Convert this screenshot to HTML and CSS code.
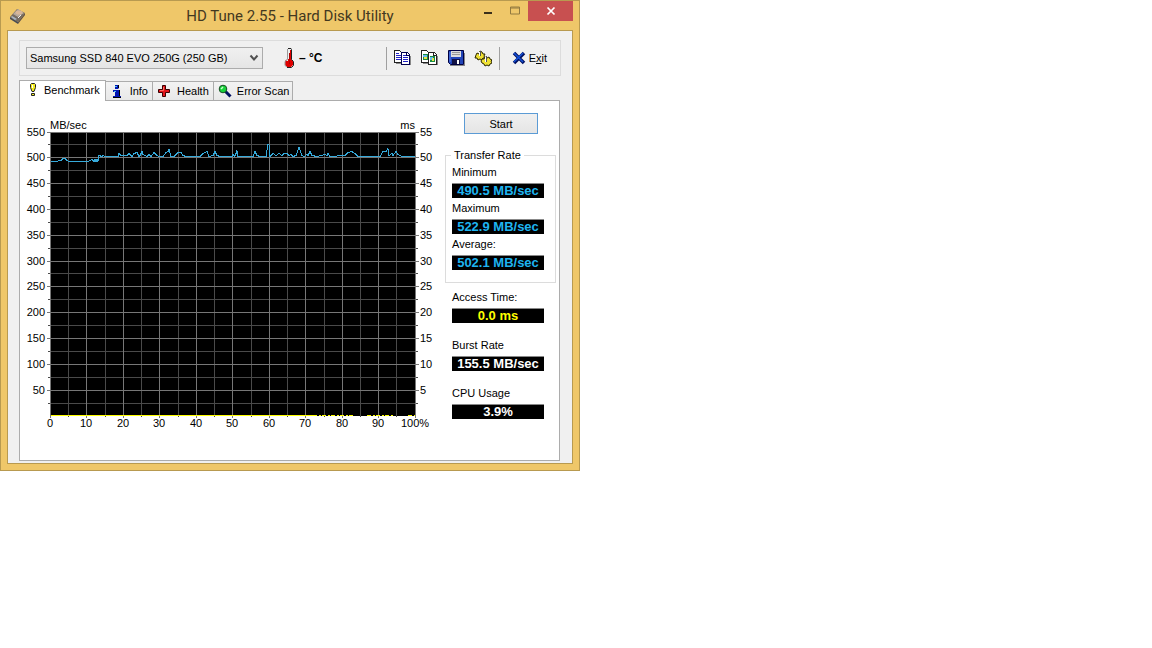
FILE: index.html
```html
<!DOCTYPE html>
<html lang="en">
<head>
<meta charset="utf-8">
<title>HD Tune 2.55 - Hard Disk Utility</title>
<link rel="stylesheet" href="styles.css">
</head>
<body>
<main class="window">
  <header class="titlebar">
    <svg class="app-icon" width="18" height="18" viewBox="0 0 18 18" aria-hidden="true">
      <path d="M1 10 8 2l8 4-7 9z" fill="#756b62"/><path d="M1 10v2l8 5v-2z" fill="#474b55"/><path d="M9 15v2l7-9V6z" fill="#5f5147"/>
      <path d="M4 7 9 2l6 4-6 4z" fill="#b7a99c"/><ellipse cx="10" cy="5.500" rx="3.500" ry="2" fill="#d8b79a"/><path d="m3 9 5 3-2 1-4-3z" fill="#a8b5c4"/><path d="m9 11 3-3" stroke="#eee"/>
    </svg>
    <h1 class="title">HD Tune 2.55 - Hard Disk Utility</h1>
    <div class="controls">
      <button class="control" aria-label="Minimize"><svg width="10" height="12"><path d="M1 7h8v2H1z" fill="#3b2f1a"/></svg></button>
      <button class="control" aria-label="Maximize" disabled><svg width="12" height="12"><path d="M1.500 2h9v7h-9zM1 3h10" fill="none" stroke="#927a40"/></svg></button>
      <button class="control close" aria-label="Close"><svg width="10" height="10"><path d="m1.500 1.500 7 7m0-7-7 7" stroke="#fff" stroke-width="1.700"/></svg></button>
    </div>
  </header>

  <div class="client">
    <div class="toolbar">
      <select class="drive" aria-label="Drive"><option>Samsung SSD 840 EVO 250G (250 GB)</option></select>
      <div class="temperature">
        <svg width="12" height="20" viewBox="0 0 12 20" aria-hidden="true">
          <path d="M4 2h4v9l2 2v4l-2 2H4l-2-2v-4l2-2z" fill="#e00000"/><path d="M4 2h2v9H5v2H3v-1l1-1zM5 1h2v4H5z" fill="#eee"/>
          <path d="M5 .5h3l.5 1v10l2 2v4l-2 2H4" fill="none" stroke="#222"/><path d="M4.500 1v10.500L2 13.500v4l2 1.500" fill="none" stroke="#999"/><path d="M6.500 5v11" stroke="#b00000"/>
        </svg>
        <span>– °C</span>
      </div>
      <div class="tools">
        <button class="tool" aria-label="Copy text to clipboard">
          <svg width="18" height="18" viewBox="0 0 18 18" shape-rendering="crispEdges"><path d="M3 14h5v1H3zM9 16h9V7h-1v9z" fill="#888"/>
            <path d="M1.500 1.500h5l2 2v10h-7z" fill="#fff" stroke="#222"/><path d="M3 4.500h3M3 6.500h5M3 8.500h5M3 10.500h5" stroke="#2222c8"/>
            <path d="M8.500 3.500h6l2 2v10h-8z" fill="#fff" stroke="#000050"/><path d="M13.500 3.500v3h3" fill="none" stroke="#000050"/><path d="M10 6.500h3M10 8.500h5M10 10.500h5M10 12.500h5" stroke="#2222c8"/></svg>
        </button>
        <button class="tool" aria-label="Copy screenshot to clipboard">
          <svg width="18" height="18" viewBox="0 0 18 18" shape-rendering="crispEdges"><path d="M3 14h5v1H3zM9 16h9V7h-1v9z" fill="#888"/>
            <path d="M1.500 1.500h5l2 2v10h-7z" fill="#fff" stroke="#222"/><path d="M3 5h5v6H3z" fill="#178b42"/><path d="M3 6h4v2H3z" fill="#68b8ef"/><path d="M4 8h3v2H4z" fill="#eae34b"/>
            <path d="M8.500 3.500h6l2 2v10h-8z" fill="#fff" stroke="#222"/><path d="M13.500 3.500v3h3" fill="none" stroke="#222"/><path d="M10 7h5v6h-5z" fill="#178b42"/><path d="M10 8h3v3h-3z" fill="#68b8ef"/><path d="M12 9h2v3h-2z" fill="#eae34b"/></svg>
        </button>
        <button class="tool" aria-label="Save screenshot">
          <svg width="18" height="18" viewBox="0 0 18 18"><path d="M3 16h14V4h1v13H3z" fill="#888"/><path d="M1.500 1.500h15v14h-13l-2-2z" fill="#2144b8" stroke="#000040"/>
            <path d="M4 2h10v6H4z" fill="#ddd"/><path d="M5 3.500h8M5 5.500h8" stroke="#999"/><path d="M5 10h8v5H5z" fill="#111144"/><path d="M10 11h2v4h-2z" fill="#fff"/><path d="M3 3v10" stroke="#5c86f0"/></svg>
        </button>
        <button class="tool" aria-label="Options">
          <svg width="18" height="18" viewBox="0 0 18 18">
            <path d="m2 6 1-2 2 1 1-3 2 1 1 2 2 0-1 2 1 2-2 0-1 2-2-1-2 1-1-2-2 0z" fill="#eee032" stroke="#2a2600"/>
            <path d="m7 12 1-2 2 0 1-2 2 1 2-1 1 2 2 1-1 1 1 2-2 1-1 2-2-1-2 1-1-2-2-1z" fill="#eee032" stroke="#2a2600"/>
            <path d="M6.500 2v5M12.500 7v6" stroke="#555"/><path d="M5.500 3v4M11.500 8v5" stroke="#fff"/></svg>
        </button>
      </div>
      <button class="exit">
        <svg width="14" height="14" viewBox="0 0 14 14" aria-hidden="true"><path d="m2 2 10 10m0-10-10 10" stroke="#001060" stroke-width="3.500"/><path d="m2 2 9 9m0-9-9 9" stroke="#1552d8" stroke-width="1.500"/></svg>
        <span>E<u>x</u>it</span>
      </button>
    </div>

    <div class="tabs" role="tablist">
      <button class="tab active" role="tab" aria-selected="true">
        <svg width="10" height="14" viewBox="0 0 10 14" aria-hidden="true"><path d="M3.500.5h3l1 1v3l-1.500 4h-2l-1.500-4v-3zM3.500 10.500h3v2h-3z" fill="#f4ed20" stroke="#222"/><path d="M4.500 2v3" stroke="#fff"/></svg>Benchmark</button>
      <button class="tab" role="tab" aria-selected="false">
        <svg width="14" height="14" viewBox="-2 0 14 14" aria-hidden="true"><path d="M3 1h3l1 1v2L6 5H3V1zM1 6h6v6h2v2H1v-2h2V8H1z" fill="#0014b4"/><path d="M6.500 1v3M7.500 6v6M9 13.500H1" stroke="#000"/><path d="M3 2h2v1H3zM2 7h2v1H2z" fill="#4ac4f0"/></svg>Info</button>
      <button class="tab" role="tab" aria-selected="false">
        <svg width="14" height="14" viewBox="0 0 14 14" aria-hidden="true"><path d="M5.500 1.500h3v4h4v3h-4v4h-3v-4h-4v-3h4z" fill="#e2141a" stroke="#3a0000"/><path d="M6.500 3v3.500H3" fill="none" stroke="#ff6c65"/></svg>Health</button>
      <button class="tab" role="tab" aria-selected="false">
        <svg width="14" height="14" viewBox="0 0 14 14" aria-hidden="true"><path d="m7.500 7.500 5 5" stroke="#001060" stroke-width="3"/><circle cx="5" cy="5" r="3.800" fill="#18d33b" stroke="#174d24"/><path d="M3 5 5 3" stroke="#c7ffc9" stroke-width="1.500"/></svg>Error Scan</button>
    </div>

    <section class="panel">
      <svg class="chart" viewBox="20 110 420 325" role="img" aria-label="Transfer rate benchmark">
        <path d="M50 132h366v284H50z" fill="#000"/>
        <path class="minor" d="M48 144.500h370M48 170.500h370M48 196.500h370M48 222.500h370M48 248.500h370M48 273.500h370M48 299.500h370M48 325.500h370M48 351.500h370M48 377.500h370M48 403.500h370M68.500 132v285M105.500 132v285M141.500 132v285M178.500 132v285M214.500 132v285M251.500 132v285M287.500 132v285M324.500 132v285M360.500 132v285M396.500 132v285"/>
        <path class="major" d="M47 132.500h372M47 157.500h372M47 183.500h372M47 209.500h372M47 235.500h372M47 261.500h372M47 286.500h372M47 312.500h372M47 338.500h372M47 364.500h372M47 390.500h372M50.500 132v286M86.500 132v286M123.500 132v286M159.500 132v286M196.500 132v286M232.500 132v286M269.500 132v286M305.500 132v286M342.500 132v286M378.500 132v286M415.500 132v286"/>
        <path class="access" d="M51 415.500h262"/>
        <path class="access sparse" d="M313 415.500h40M367 415.500h27M408 415.500h7"/>
        <polyline class="rate" transform="translate(0 -.5)" points="51,162 57,162 59,161 61,161 63,159 65,159 67,161 69,162 88,162 92,160 94,162 95,160 96,162 97,160 98,162 99,156 102,157 103,156 105,157 118,157 119,154 121,156 127,156 129,154 132,157 134,154 137,153 139,157 140,156 142,152 143,155 147,157 149,155 151,157 154,153 157,156 159,157 163,157 166,153 168,152 169,150 171,157 174,157 178,153 181,153 183,156 186,157 200,157 203,154 207,152 209,157 213,156 215,152 217,156 220,157 232,157 233,155 235,157 237,151 238,157 253,157 255,152 257,156 260,157 266,157 268,145 269,145 270,157 273,154 276,156 279,154 282,156 284,154 287,154 289,156 291,155 293,157 296,156 299,148 302,156 304,157 307,155 308,156 310,152 312,156 317,157 325,155 327,156 328,154 330,157 345,156 348,153 352,152 356,155 358,157 380,157 383,152 386,152 388,149 389,156 392,154 393,156 396,152 398,155 402,157 415,157"/>
        <g class="labels">
          <text x="50" y="129">MB/sec</text>
          <g text-anchor="end"><text x="415" y="129">ms</text><text x="45" y="136">550</text><text x="45" y="161">500</text><text x="45" y="187">450</text><text x="45" y="213">400</text><text x="45" y="239">350</text><text x="45" y="265">300</text><text x="45" y="290">250</text><text x="45" y="316">200</text><text x="45" y="342">150</text><text x="45" y="368">100</text><text x="45" y="394">50</text></g>
          <g><text x="420" y="136">55</text><text x="420" y="161">50</text><text x="420" y="187">45</text><text x="420" y="213">40</text><text x="420" y="239">35</text><text x="420" y="265">30</text><text x="420" y="290">25</text><text x="420" y="316">20</text><text x="420" y="342">15</text><text x="420" y="368">10</text><text x="420" y="394">5</text></g>
          <g text-anchor="middle"><text x="50" y="427">0</text><text x="86" y="427">10</text><text x="123" y="427">20</text><text x="159" y="427">30</text><text x="196" y="427">40</text><text x="232" y="427">50</text><text x="269" y="427">60</text><text x="305" y="427">70</text><text x="342" y="427">80</text><text x="378" y="427">90</text><text x="415" y="427">100%</text></g>
        </g>
      </svg>

      <aside class="results">
        <button class="start">Start</button>
        <fieldset class="group">
          <legend>Transfer Rate</legend>
          <dl class="readings">
            <div class="reading"><dt>Minimum</dt><dd class="value">490.5 MB/sec</dd></div>
            <div class="reading"><dt>Maximum</dt><dd class="value">522.9 MB/sec</dd></div>
            <div class="reading"><dt>Average:</dt><dd class="value">502.1 MB/sec</dd></div>
          </dl>
        </fieldset>
        <dl class="readings other">
          <div class="reading"><dt>Access Time:</dt><dd class="value time">0.0 ms</dd></div>
          <div class="reading"><dt>Burst Rate</dt><dd class="value plain">155.5 MB/sec</dd></div>
          <div class="reading"><dt>CPU Usage</dt><dd class="value plain">3.9%</dd></div>
        </dl>
      </aside>
    </section>
  </div>
</main>
</body>
</html>
```
FILE: styles.css
```css
* { box-sizing: border-box; }
body { margin: 0; background: #fff; color: #000; font: 11px/14px "Liberation Sans", Arial, sans-serif; }
button, select { margin: 0; padding: 0; border: 0; background: none; color: inherit; font: inherit; }
svg { display: block; flex: none; }
dl, dd { margin: 0; }

.window { max-width: 580px; padding: 0 6px 6px; border: 1px solid #b89a50; background: #efc769; }
.titlebar { display: grid; grid-template-columns: 99px 1fr 99px; align-items: start; height: 29px; }
.app-icon { margin: 6px 0 0 2px; }
.title { margin: 4px 0 0; color: #43381f; font: 15px/22px Roboto, "Open Sans", sans-serif; text-align: center; white-space: nowrap; }
.controls { display: flex; justify-content: flex-end; }
.control { display: flex; align-items: center; justify-content: center; width: 27px; height: 20px; }
.close { width: 45px; background: #c85050; }

.client { padding: 9px 11px 2px; border: 1px solid #b89a50; background: #f0f0f0; }
.toolbar { display: flex; align-items: center; height: 36px; padding: 0 6px; border: 1px solid #dcdcdc; }
.drive { flex: 0 1 237px; height: 22px; padding: 0 20px 0 3px; border: 1px solid #acacac; appearance: none;
  background: url("data:image/svg+xml,%3Csvg xmlns='http://www.w3.org/2000/svg' width='10' height='8'%3E%3Cpath d='m1.500 1.500 3.500 4 3.500-4' fill='none' stroke='%23505050' stroke-width='2'/%3E%3C/svg%3E") right 3px center no-repeat, linear-gradient(#f0f0f0, #e5e5e5); }
.temperature { display: flex; align-items: center; gap: 4px; margin-left: 20px; font-size: 12px; font-weight: bold; }
.tools { display: flex; align-items: center; gap: 9px; height: 23px; margin-left: auto; padding: 0 7px 0 6px; border: solid #a0a0a0; border-width: 0 1px; }
.tool { width: 18px; height: 18px; }
.exit { display: flex; align-items: center; gap: 3px; margin: 0 7px 0 12px; }

.tabs { display: flex; align-items: flex-end; height: 24px; }
.tab { display: flex; align-items: center; gap: 6px; height: 19px; padding: 0 4px; border: 1px solid #acacac; border-bottom: 0; border-left: 0; background: linear-gradient(#f3f3f3, #e8e8e8); }
.tab:last-child { gap: 5px; padding: 0 3px 0 4px; }
.tab.active { position: relative; gap: 6px; height: 21px; margin-bottom: -1px; padding: 0 5px 2px 8px; border-left: 1px solid #acacac; background: #fff; }

.panel { display: flex; align-items: flex-start; min-height: 361px; margin-right: 1px; border: 1px solid #acacac; background: #fff; }
.chart { flex: 1 1 420px; min-width: 0; margin-top: 9px; }
.minor, .major, .access, .rate { fill: none; stroke-width: 1px; shape-rendering: crispEdges; }
.minor { stroke: #4a4a4a; }
.major { stroke: #777; }
.access { stroke: #ff0; }
.sparse { stroke-dasharray: 4 2 2 1; }
.rate { stroke: #36aadb; }

.results { flex: none; width: 119px; padding: 12px 3px 0 5px; }
.start { display: block; width: 74px; height: 21px; margin: 0 0 14px 19px; border: 1px solid #5b9bd5; background: linear-gradient(#f0f0f0, #e5e5e5); }
.group { min-width: 0; margin: 0; padding: 2px 11px 12px 6px; border: 1px solid #dcdcdc; }
.group legend { padding: 0 3px; margin-left: -1px; }
.readings { display: grid; gap: 2px; }
.other { gap: 14px; padding: 6px 12px 0 7px; }
.reading { display: grid; gap: 3px; line-height: 16px; }
.value { height: 15px; border-top: 1px solid #888; background: #000; color: #1eb4f0; font-size: 13px; font-weight: bold; line-height: 14px; text-align: center; }
.value.time { color: #ff0; }
.value.plain { color: #fff; }
```
